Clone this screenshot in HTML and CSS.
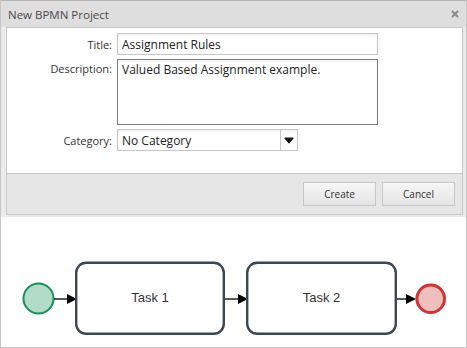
FILE: index.html
```html
<!DOCTYPE html>
<html>
<head>
<meta charset="utf-8">
<link rel="stylesheet" href="styles.css">
</head>
<body>
<div class="page">
  <div class="dialog">
    <div class="titlebar">
      <span class="title">New BPMN Project</span>
      <svg class="close" width="8" height="8" viewBox="0 0 8 8"><path d="M1 1L7 7M7 1L1 7" stroke="#8a8a8a" stroke-width="2"/></svg>
    </div>
    <div class="panel">
      <div class="form">
        <label class="label">Title:</label>
        <div class="field input">Assignment Rules</div>
        <label class="label label-top">Description:</label>
        <div class="field textarea">Valued Based Assignment example.</div>
        <label class="label">Category:</label>
        <div class="field select">
          <span class="select-text">No Category</span>
          <span class="select-btn"><svg width="10" height="7" viewBox="0 0 10 7"><path d="M1 1.2H9L5 5.8Z" fill="#111" stroke="#111" stroke-width="1.2" stroke-linejoin="round"/></svg></span>
        </div>
      </div>
      <div class="footer">
        <button class="btn">Create</button>
        <button class="btn">Cancel</button>
      </div>
    </div>
  </div>
  <svg class="diagram" width="466" height="130" viewBox="0 0 466 130">
    <circle cx="37.5" cy="81.5" r="15" fill="#b3dcc8" stroke="#17905a" stroke-width="2"/>
    <line x1="53" y1="82" x2="68" y2="82" stroke="#000" stroke-width="1.3"/>
    <path d="M66 77L76 82L66 87Z" fill="#000"/>
    <rect x="75.2" y="45.8" width="147.6" height="71" rx="10" fill="#fff" stroke="#3b4753" stroke-width="2.4"/>
    <text x="149" y="85" class="task">Task 1</text>
    <line x1="224" y1="82" x2="239" y2="82" stroke="#000" stroke-width="1.3"/>
    <path d="M237 77L247 82L237 87Z" fill="#000"/>
    <rect x="246.2" y="45.8" width="148.6" height="71" rx="10" fill="#fff" stroke="#3b4753" stroke-width="2.4"/>
    <text x="320.5" y="85" class="task">Task 2</text>
    <line x1="396" y1="82" x2="408" y2="82" stroke="#000" stroke-width="1.3"/>
    <path d="M405 77L415 82L405 87Z" fill="#000"/>
    <circle cx="429.7" cy="81.8" r="13.8" fill="#efbfbf" stroke="#d03434" stroke-width="3"/>
  </svg>
</div>
</body>
</html>
```
FILE: styles.css
```css
* { box-sizing: border-box; }
html, body { margin: 0; padding: 0; background: #fff; }
.page {
  width: 467px;
  height: 348px;
  border-left: 1px solid #c6c6c6;
  border-right: 1px solid #c6c6c6;
  border-bottom: 1px solid #c6c6c6;
  display: flex;
  flex-direction: column;
  font-family: "Open Sans", "DejaVu Sans", sans-serif;
  color: #333;
}
.dialog {
  height: 217px;
  background: #ebebeb;
  border-top: 1px solid #b6b6b6;
  display: flex;
  flex-direction: column;
}
.titlebar {
  height: 26px;
  background: #dedede;
  display: flex;
  align-items: center;
  justify-content: space-between;
  padding: 0 7px 0 7px;
}
.title {
  font-size: 11.5px;
  color: #4a4a4a;
}
.close { margin-right: 0; }
.panel {
  margin: 0 3px 0 5px;
  height: 188px;
  border: 1px solid #c8c8c8;
  display: flex;
  flex-direction: column;
}
.form {
  height: 145px;
  background: #fff;
  padding-top: 5px;
  display: grid;
  grid-template-columns: 105px 261px;
  grid-template-rows: 22px 66px 22px;
  column-gap: 5px;
  row-gap: 4px;
  align-content: start;
}
.label {
  font-size: 11px;
  text-align: right;
  align-self: center;
  color: #333;
}
.label-top {
  align-self: start;
  padding-top: 2px;
}
.field {
  background: #fff;
  border: 1px solid #c6c6c6;
  font-size: 12px;
  color: #222;
  padding: 0 4px;
  box-shadow: inset 0 2px 3px rgba(0,0,0,0.05);
}
.input {
  display: flex;
  align-items: center;
}
.textarea {
  border-color: #7c7c7c;
  padding-top: 1px;
  line-height: 17px;
}
.select {
  width: 181px;
  display: flex;
  align-items: center;
  padding-right: 0;
}
.select-text { flex: 1; }
.select-btn {
  width: 17px;
  height: 100%;
  border-left: 1px solid #c6c6c6;
  display: flex;
  align-items: center;
  justify-content: center;
}
.footer {
  flex: 1;
  border-top: 1px solid #c8c8c8;
  background: #e6e6e6;
  display: flex;
  justify-content: flex-end;
  align-items: center;
  gap: 6px;
  padding-right: 7px;
}
.btn {
  width: 73px;
  height: 24px;
  border: 1px solid #c6c6c6;
  background: linear-gradient(#f6f6f6, #e4e4e4);
  font-family: "Open Sans", "DejaVu Sans", sans-serif;
  font-size: 10px;
  color: #333;
  padding: 0;
}
.diagram { display: block; }
.task {
  font-family: "Liberation Sans", Arial, sans-serif;
  font-size: 13px;
  fill: #333;
  text-anchor: middle;
}
```
